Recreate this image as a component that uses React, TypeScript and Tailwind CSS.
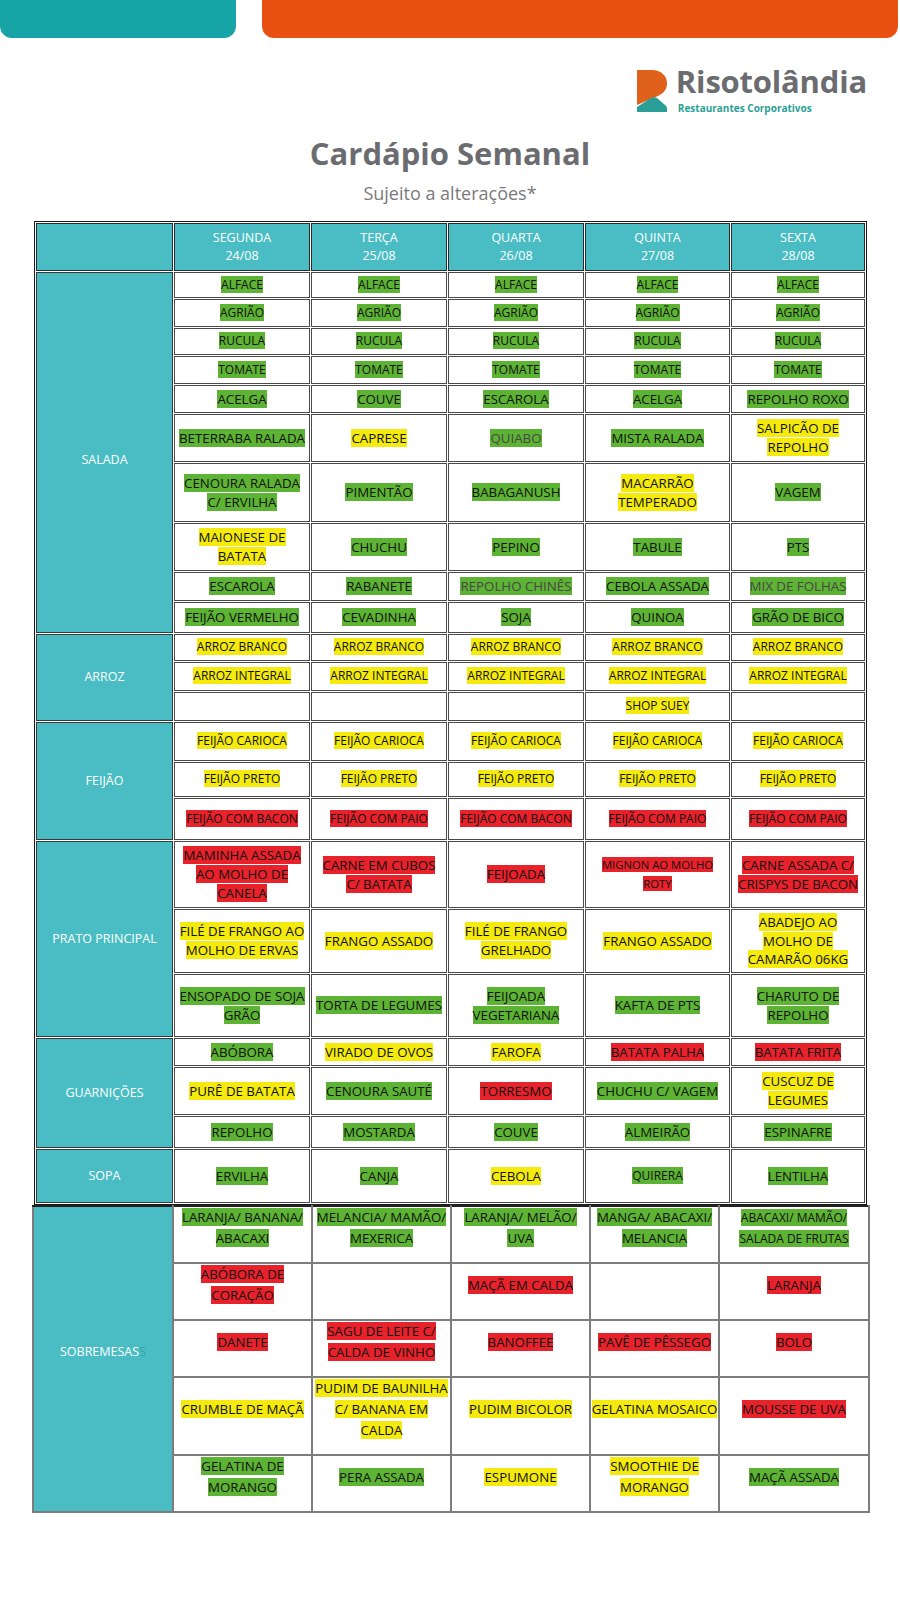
import React from "react";

type Hl = "g" | "y" | "r" | "";
type Item = { t: string; c: Hl; size?: string; gray?: boolean };
type Row = { h: string; cells: Item[]; label?: { text: string; span: number; pad?: string } };

const HL: Record<Hl, string> = {
  g: "bg-[#5db333]",
  y: "bg-[#f5ea0d]",
  r: "bg-[#e8222b]",
  "": "",
};

const SM = "text-[12px]";
const XS = "text-[11.3px]";

const g = (t: string, size?: string, gray?: boolean): Item => ({ t, c: "g", size, gray });
const y = (t: string, size?: string): Item => ({ t, c: "y", size });
const r = (t: string, size?: string): Item => ({ t, c: "r", size });
const blank: Item = { t: "", c: "" };
const five = (it: Item) => [it, it, it, it, it];

const days = [
  ["SEGUNDA", "24/08"],
  ["TERÇA", "25/08"],
  ["QUARTA", "26/08"],
  ["QUINTA", "27/08"],
  ["SEXTA", "28/08"],
];

const rows: Row[] = [
  { h: "h-[26px]", label: { text: "SALADA", span: 10, pad: "pt-[16px]" }, cells: five(g("ALFACE", SM)) },
  { h: "h-[28px]", cells: five(g("AGRIÃO", SM)) },
  { h: "h-[27px]", cells: five(g("RUCULA", SM)) },
  { h: "h-[28px]", cells: five(g("TOMATE", SM)) },
  { h: "h-[28px]", cells: [g("ACELGA"), g("COUVE"), g("ESCAROLA"), g("ACELGA"), g("REPOLHO ROXO")] },
  {
    h: "h-[48px]",
    cells: [g("BETERRABA RALADA"), y("CAPRESE"), g("QUIABO", undefined, true), g("MISTA RALADA"), y("SALPICÃO DE\nREPOLHO")],
  },
  {
    h: "h-[59px]",
    cells: [g("CENOURA RALADA\nC/ ERVILHA"), g("PIMENTÃO"), g("BABAGANUSH"), y("MACARRÃO\nTEMPERADO"), g("VAGEM")],
  },
  { h: "h-[48px]", cells: [y("MAIONESE DE\nBATATA"), g("CHUCHU"), g("PEPINO"), g("TABULE"), g("PTS")] },
  {
    h: "h-[29px]",
    cells: [g("ESCAROLA"), g("RABANETE"), g("REPOLHO CHINÊS", undefined, true), g("CEBOLA ASSADA"), g("MIX DE FOLHAS", undefined, true)],
  },
  { h: "h-[31px]", cells: [g("FEIJÃO VERMELHO"), g("CEVADINHA"), g("SOJA"), g("QUINOA"), g("GRÃO DE BICO")] },

  { h: "h-[27px]", label: { text: "ARROZ", span: 3 }, cells: five(y("ARROZ BRANCO", SM)) },
  { h: "h-[29px]", cells: five(y("ARROZ INTEGRAL", SM)) },
  { h: "h-[29px]", cells: [blank, blank, blank, y("SHOP SUEY", SM), blank] },

  { h: "h-[39px]", label: { text: "FEIJÃO", span: 3 }, cells: five(y("FEIJÃO CARIOCA", SM)) },
  { h: "h-[35px]", cells: five(y("FEIJÃO PRETO", SM)) },
  {
    h: "h-[42px]",
    cells: [
      r("FEIJÃO COM BACON", SM),
      r("FEIJÃO COM PAIO", SM),
      r("FEIJÃO COM BACON", SM),
      r("FEIJÃO COM PAIO", SM),
      r("FEIJÃO COM PAIO", SM),
    ],
  },

  {
    h: "h-[67px]",
    label: { text: "PRATO PRINCIPAL", span: 3 },
    cells: [
      r("MAMINHA ASSADA\nAO MOLHO DE\nCANELA"),
      r("CARNE EM CUBOS\nC/ BATATA"),
      r("FEIJOADA"),
      r("MIGNON AO MOLHO\nROTY", XS),
      r("CARNE ASSADA C/\nCRISPYS DE BACON"),
    ],
  },
  {
    h: "h-[64px]",
    cells: [
      y("FILÉ DE FRANGO AO\nMOLHO DE ERVAS"),
      y("FRANGO ASSADO"),
      y("FILÉ DE FRANGO\nGRELHADO"),
      y("FRANGO ASSADO"),
      y("ABADEJO AO\nMOLHO DE\nCAMARÃO 06KG"),
    ],
  },
  {
    h: "h-[63px]",
    cells: [
      g("ENSOPADO DE SOJA\nGRÃO"),
      g("TORTA DE LEGUMES"),
      g("FEIJOADA\nVEGETARIANA"),
      g("KAFTA DE PTS"),
      g("CHARUTO DE\nREPOLHO"),
    ],
  },

  {
    h: "h-[28px]",
    label: { text: "GUARNIÇÕES", span: 3 },
    cells: [g("ABÓBORA"), y("VIRADO DE OVOS"), y("FAROFA"), r("BATATA PALHA"), r("BATATA FRITA")],
  },
  {
    h: "h-[48px]",
    cells: [y("PURÊ DE BATATA"), g("CENOURA SAUTÉ"), r("TORRESMO"), g("CHUCHU C/ VAGEM"), y("CUSCUZ DE\nLEGUMES")],
  },
  { h: "h-[32px]", cells: [g("REPOLHO"), g("MOSTARDA"), g("COUVE"), g("ALMEIRÃO"), g("ESPINAFRE")] },

  {
    h: "h-[54px]",
    label: { text: "SOPA", span: 1 },
    cells: [g("ERVILHA"), g("CANJA"), y("CEBOLA"), g("QUIRERA", SM), g("LENTILHA")],
  },
];

const desserts: { h: string; cells: Item[] }[] = [
  {
    h: "h-[57px]",
    cells: [
      g("LARANJA/ BANANA/\nABACAXI"),
      g("MELANCIA/ MAMÃO/\nMEXERICA"),
      g("LARANJA/ MELÃO/\nUVA"),
      g("MANGA/ ABACAXI/\nMELANCIA"),
      g("ABACAXI/ MAMÃO/\nSALADA DE FRUTAS", SM),
    ],
  },
  { h: "h-[56px]", cells: [r("ABÓBORA DE\nCORAÇÃO"), blank, r("MAÇÃ EM CALDA"), blank, r("LARANJA")] },
  {
    h: "h-[56px]",
    cells: [r("DANETE"), r("SAGU DE LEITE C/\nCALDA DE VINHO"), r("BANOFFEE"), r("PAVÊ DE PÊSSEGO"), r("BOLO")],
  },
  {
    h: "h-[78px]",
    cells: [
      y("CRUMBLE DE MAÇÃ"),
      y("PUDIM DE BAUNILHA\nC/ BANANA EM\nCALDA"),
      y("PUDIM BICOLOR"),
      y("GELATINA MOSAICO"),
      r("MOUSSE DE UVA"),
    ],
  },
  {
    h: "h-[55px]",
    cells: [g("GELATINA DE\nMORANGO"), g("PERA ASSADA"), y("ESPUMONE"), y("SMOOTHIE DE\nMORANGO"), g("MAÇÃ ASSADA")],
  },
];

function CellText({ item }: { item: Item }) {
  const lines = item.t ? item.t.split("\n") : [];
  return (
    <>
      {lines.map((line, i) => (
        <React.Fragment key={i}>
          {i > 0 && <br />}
          <span className={`${HL[item.c]} whitespace-nowrap`}>{line}</span>
        </React.Fragment>
      ))}
    </>
  );
}

function Logo() {
  return (
    <div className="flex justify-end pr-[33px] mt-[32px]">
      <svg width="30" height="42" viewBox="0 0 30 42">
        <path d="M0 0 H15 C24 0 30 6 30 13 C30 19 27 23 21 26 L0 35 Z" fill="#e0611b" />
        <path d="M0 37 L14 28 C16 27 18 27 20 28 L28 35 C29.5 36 30 37 30 39 V42 H0 Z" fill="#2a9f98" />
      </svg>
      <div className="ml-[9px] mt-[-4px] flex flex-col">
        <span className="text-[31px] leading-[30px] font-bold text-[#6b6c70] tracking-[-0.2px]">Risotolândia</span>
        <span className="mt-[7px] text-[10px] leading-[10px] font-bold text-[#2a9f98] pl-[2px]">
          Restaurantes Corporativos
        </span>
      </div>
    </div>
  );
}

export default function App() {
  return (
    <div className="w-[900px] min-h-[1603px] bg-white font-['Open_Sans',sans-serif] text-[#111]">
      <div className="flex h-[38px]">
        <div className="w-[236px] h-full bg-[#16a4a6] rounded-b-[12px]" />
        <div className="ml-[26px] w-[636px] h-full bg-[#e85112] rounded-b-[12px]" />
      </div>

      <Logo />

      <h1 className="mt-[22px] text-center text-[31px] leading-[37px] font-bold text-[#6b6c6f]">Cardápio Semanal</h1>
      <p className="mt-[9px] text-center text-[18px] leading-[24px] text-[#7a7a7a]">Sujeito a alterações*</p>

      <table className="mt-[16px] ml-[34px] w-[833px] table-fixed border-separate border-spacing-[1px] border border-[#1a1a1a]">
        <colgroup>
          <col className="w-[137px]" />
          <col className="w-[136px]" />
          <col className="w-[136px]" />
          <col className="w-[136px]" />
          <col className="w-[145px]" />
          <col className="w-[134px]" />
        </colgroup>
        <thead>
          <tr className="h-[48px]">
            <th className="bg-[#49bdc3] border border-[#2b2b2b]" />
            {days.map(([d, dt]) => (
              <th
                key={d}
                className="bg-[#49bdc3] border border-[#2b2b2b] text-white font-normal text-[12.5px] leading-[18px] text-center align-middle"
              >
                {d}
                <br />
                {dt}
              </th>
            ))}
          </tr>
        </thead>
        <tbody>
          {rows.map((row, ri) => (
            <tr key={ri} className={row.h}>
              {row.label && (
                <td
                  rowSpan={row.label.span}
                  className={`bg-[#49bdc3] border border-[#3a3a3a] text-white text-[12.5px] text-center align-middle ${row.label.pad ?? ""}`}
                >
                  {row.label.text}
                </td>
              )}
              {row.cells.map((item, ci) => (
                <td
                  key={ci}
                  className={`border border-[#4a4a4a] p-0 text-center align-middle whitespace-nowrap leading-[18.7px] ${item.size ?? "text-[13.3px]"} ${item.gray ? "text-[#474747]" : "text-[#111]"}`}
                >
                  <CellText item={item} />
                </td>
              ))}
            </tr>
          ))}
        </tbody>
      </table>

      <table className="ml-[32px] w-[836px] table-fixed border-collapse">
        <colgroup>
          <col className="w-[140px]" />
          <col className="w-[139px]" />
          <col className="w-[139px]" />
          <col className="w-[139px]" />
          <col className="w-[129px]" />
          <col className="w-[150px]" />
        </colgroup>
        <tbody>
          {desserts.map((row, ri) => (
            <tr key={ri} className={row.h}>
              {ri === 0 && (
                <td
                  rowSpan={desserts.length}
                  className="bg-[#49bdc3] border-2 border-[#7d7d7d] border-t-[#222] text-white text-[12.5px] text-center align-middle pb-[14px]"
                >
                  SOBREMESAS<span className="text-[#33a3a9]">S</span>
                </td>
              )}
              {row.cells.map((item, ci) => (
                <td
                  key={ci}
                  className={`border-2 border-[#7d7d7d] ${ri === 0 ? "border-t-[#222]" : ""} p-0 pb-[13px] text-center align-middle whitespace-nowrap leading-[21px] ${item.size ?? "text-[13.3px]"} text-[#111]`}
                >
                  <CellText item={item} />
                </td>
              ))}
            </tr>
          ))}
        </tbody>
      </table>
    </div>
  );
}
